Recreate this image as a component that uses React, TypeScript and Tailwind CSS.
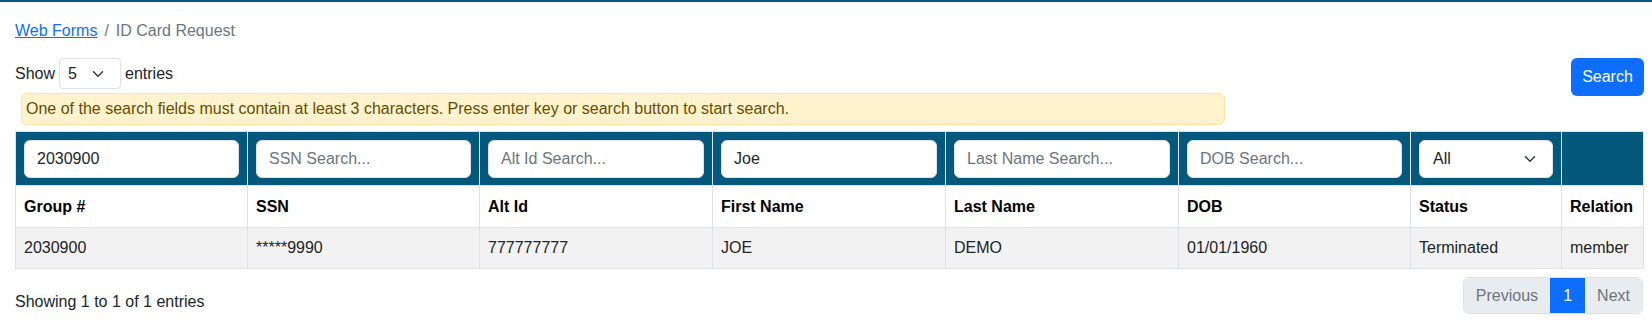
import React from "react"

const cols = [
  { key: "group", label: "Group #", w: "w-[232px]", filter: "2030900", ph: "" },
  { key: "ssn", label: "SSN", w: "w-[232px]", filter: "", ph: "SSN Search..." },
  { key: "alt", label: "Alt Id", w: "w-[233px]", filter: "", ph: "Alt Id Search..." },
  { key: "first", label: "First Name", w: "w-[233px]", filter: "Joe", ph: "" },
  { key: "last", label: "Last Name", w: "w-[233px]", filter: "", ph: "Last Name Search..." },
  { key: "dob", label: "DOB", w: "w-[232px]", filter: "", ph: "DOB Search..." },
]

const row = ["2030900", "*****9990", "777777777", "JOE", "DEMO", "01/01/1960", "Terminated", "member"]

function Chevron() {
  return (
    <svg width="12" height="12" viewBox="0 0 16 16" fill="none" stroke="#343a40" strokeWidth="2" strokeLinecap="round" strokeLinejoin="round">
      <path d="M2 5l6 6 6-6" />
    </svg>
  )
}

export default function App() {
  return (
    <div className="min-h-screen bg-white border-t-2 border-[#03587c] pl-[15px] pr-[8px] font-['Liberation_Sans',Arial,sans-serif] text-[16px] leading-[24px] text-[#212529]">
      {/* breadcrumb */}
      <div className="pt-[17px] flex items-center">
        <a href="#" className="text-[#0d6efd] underline">Web Forms</a>
        <span className="px-[7px] text-[#6c757d]">/</span>
        <span className="text-[#6c757d]">ID Card Request</span>
      </div>

      <div className="mt-[15px] flex justify-between items-start">
        <div className="flex flex-col">
          <div className="flex items-center h-[31px]">
            <span>Show</span>
            <div className="mx-[4px] w-[62px] h-[31px] border border-[#dee2e6] rounded-[4px] flex items-center justify-between pl-[8px] pr-[16px]">
              <span>5</span>
              <Chevron />
            </div>
            <span>entries</span>
          </div>
          <div className="mt-[4px] ml-[6px] w-[1204px] h-[32px] bg-[#fff3cd] border border-[#ffe69c] rounded-[6px] flex items-center px-[4px] text-[#664d03]">
            One of the search fields must contain at least 3 characters. Press enter key or search button to start search.
          </div>
        </div>
        <button className="w-[73px] h-[38px] bg-[#0d6efd] text-white rounded-[6px]">Search</button>
      </div>

      <table className="mt-[6px] w-[1628px] table-fixed border-collapse">
        <thead>
          <tr className="bg-[#03587c]">
            {cols.map(c => (
              <td key={c.key} className={`${c.w} h-[54px] px-[8px] py-0 border border-[#dee2e6]`}>
                <input
                  defaultValue={c.filter}
                  placeholder={c.ph}
                  className="w-full h-[38px] bg-white rounded-[6px] border border-[#dee2e6] px-[12px] outline-none placeholder:text-[#6c757d]"
                />
              </td>
            ))}
            <td className="w-[151px] h-[54px] px-[8px] py-0 border border-[#dee2e6]">
              <div className="h-[38px] bg-white rounded-[6px] border border-[#dee2e6] flex items-center justify-between pl-[13px] pr-[16px]">
                <span>All</span>
                <Chevron />
              </div>
            </td>
            <td className="w-[82px] border border-[#dee2e6]"></td>
          </tr>
          <tr>
            {[...cols.map(c => c.label), "Status", "Relation"].map(l => (
              <th key={l} className="h-[42px] px-[8px] text-left font-bold text-black border border-[#dee2e6]">{l}</th>
            ))}
          </tr>
        </thead>
        <tbody>
          <tr className="bg-[#f2f2f2]">
            {row.map((v, i) => (
              <td key={i} className="h-[41px] px-[8px] border border-[#dee2e6]">{v}</td>
            ))}
          </tr>
        </tbody>
      </table>

      <div className="mt-[8px] flex justify-between items-start w-[1628px]">
        <div className="pt-[13px]">Showing 1 to 1 of 1 entries</div>
        <div className="flex h-[37px] rounded-[6px] overflow-hidden border border-[#dee2e6]">
          <span className="px-[12px] flex items-center bg-[#e9ecef] text-[#6c757d]">Previous</span>
          <span className="w-[35px] flex items-center justify-center bg-[#0d6efd] text-white">1</span>
          <span className="px-[12px] flex items-center bg-[#e9ecef] text-[#6c757d]">Next</span>
        </div>
      </div>
    </div>
  )
}
